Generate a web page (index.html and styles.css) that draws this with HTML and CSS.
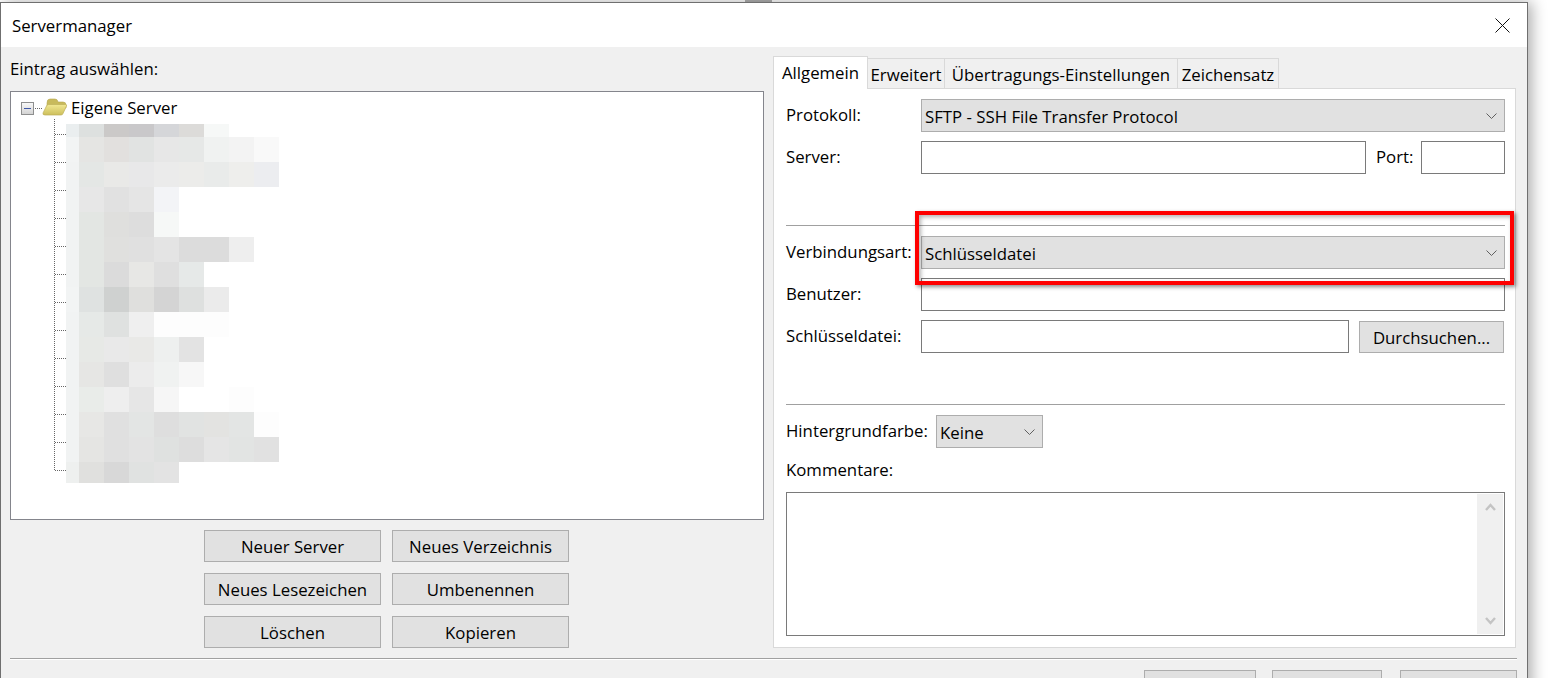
FILE: index.html
```html
<!DOCTYPE html>
<html lang="de">
<head>
<meta charset="utf-8">
<title>Servermanager</title>
<link rel="stylesheet" href="styles.css">
</head>
<body>
<div class="behind"><span class="behind-tab"></span></div>
<div class="window">
  <header class="titlebar">
    <span class="title">Servermanager</span>
    <svg class="close" width="15" height="15" viewBox="0 0 15 15"><path d="M0.5 0.5L14.5 14.5M14.5 0.5L0.5 14.5" stroke="#111" stroke-width="1" fill="none"/></svg>
  </header>
  <main class="main">
    <section class="left">
      <div class="left-label">Eintrag auswählen:</div>
      <div class="tree">
        <div class="tree-root">
          <svg width="46" height="18" viewBox="21 98 46 18">
            <defs>
              <linearGradient id="box" x1="0" y1="0" x2="0" y2="1"><stop offset="0" stop-color="#fafafa"/><stop offset="1" stop-color="#d2d2d2"/></linearGradient>
              <linearGradient id="front" x1="0" y1="0" x2="0" y2="1"><stop offset="0" stop-color="#f1e892"/><stop offset="1" stop-color="#cdbf5c"/></linearGradient>
            </defs>
            <rect x="21.5" y="102.5" width="12" height="12" fill="url(#box)" stroke="#8e8f8f"/>
            <rect x="24" y="108" width="7" height="1" fill="#3f58a8"/>
            <path d="M35 108.5H43" stroke="#666" stroke-dasharray="1 1"/>
            <path d="M47 103q0-4 3-4h5q2.500 0 3 3h5q3 0 3 3v3h-19z" fill="#c8ba5c" stroke="#b8aa52" stroke-width=".6"/>
            <path d="M48.500 104.500h17q1.500 0 1 1.500l-3.500 7.500q-.5 1.500-2 1.500H45q-2.500 0-2-2l3.500-7q.7-1.500 2-1.500z" fill="url(#front)" stroke="#bdb05a" stroke-width=".7"/>
          </svg>
          <span class="tree-name">Eigene Server</span>
        </div>
        <svg class="tree-rows" width="230" height="370" viewBox="54 118 230 370" shape-rendering="crispEdges">
          <g stroke="#666" stroke-dasharray="1 1" fill="none">
            <path d="M54.500 120V471"/>
            <path d="M55 135.500H66M55 163.500H66M55 191.500H66M55 219.500H66M55 247.500H66M55 275.500H66M55 303.500H66M55 331.500H66M55 359.500H66M55 387.500H66M55 415.500H66M55 443.500H66M55 471.500H66"/>
          </g>
          <g>
            <rect x="66" y="125" width="13" height="13" fill="#eaeeef"/><rect x="79" y="125" width="25" height="13" fill="#dde0df"/><rect x="104" y="125" width="25" height="13" fill="#cbc9c8"/><rect x="129" y="125" width="25" height="13" fill="#c9c8ca"/><rect x="154" y="125" width="25" height="13" fill="#d5d6d9"/><rect x="179" y="125" width="25" height="13" fill="#dcdbd9"/><rect x="204" y="125" width="25" height="13" fill="#f6f8f7"/>
            <rect x="66" y="138" width="13" height="25" fill="#f2f4f4"/><rect x="79" y="138" width="25" height="25" fill="#e5e5e3"/><rect x="104" y="138" width="25" height="25" fill="#e2e0de"/><rect x="129" y="138" width="25" height="25" fill="#e1e3e2"/><rect x="154" y="138" width="25" height="25" fill="#e7e7e7"/><rect x="179" y="138" width="25" height="25" fill="#e6e8e7"/><rect x="204" y="138" width="25" height="25" fill="#f0f2f1"/><rect x="229" y="138" width="25" height="25" fill="#f3f3f3"/><rect x="254" y="138" width="25" height="25" fill="#f9f9f9"/>
            <rect x="66" y="163" width="13" height="25" fill="#f1f3f3"/><rect x="79" y="163" width="25" height="25" fill="#e4e7e5"/><rect x="104" y="163" width="25" height="25" fill="#e9e9e7"/><rect x="129" y="163" width="25" height="25" fill="#e8e8e9"/><rect x="154" y="163" width="25" height="25" fill="#ebebeb"/><rect x="179" y="163" width="25" height="25" fill="#ececea"/><rect x="204" y="163" width="25" height="25" fill="#e9ebea"/><rect x="229" y="163" width="25" height="25" fill="#eeeeec"/><rect x="254" y="163" width="25" height="25" fill="#ecedf0"/>
            <rect x="66" y="188" width="13" height="25" fill="#f1f3f3"/><rect x="79" y="188" width="25" height="25" fill="#e7e7e7"/><rect x="104" y="188" width="25" height="25" fill="#e1e1e1"/><rect x="129" y="188" width="25" height="25" fill="#e5e5e5"/><rect x="154" y="188" width="25" height="25" fill="#f3f4f7"/>
            <rect x="66" y="213" width="13" height="25" fill="#f1f3f3"/><rect x="79" y="213" width="25" height="25" fill="#e3e6e3"/><rect x="104" y="213" width="25" height="25" fill="#dfdfdd"/><rect x="129" y="213" width="25" height="25" fill="#dddddd"/><rect x="154" y="213" width="25" height="25" fill="#f6f8f7"/>
            <rect x="66" y="238" width="13" height="25" fill="#f1f3f3"/><rect x="79" y="238" width="25" height="25" fill="#e3e6e3"/><rect x="104" y="238" width="25" height="25" fill="#e0e0de"/><rect x="129" y="238" width="25" height="25" fill="#e0e0e0"/><rect x="154" y="238" width="25" height="25" fill="#e4e4e4"/><rect x="179" y="238" width="25" height="25" fill="#dcdcdc"/><rect x="204" y="238" width="25" height="25" fill="#dcdcdc"/><rect x="229" y="238" width="25" height="25" fill="#eeeeee"/>
            <rect x="66" y="263" width="13" height="25" fill="#f1f3f3"/><rect x="79" y="263" width="25" height="25" fill="#e3e6e3"/><rect x="104" y="263" width="25" height="25" fill="#dbdbdb"/><rect x="129" y="263" width="25" height="25" fill="#e7e7e5"/><rect x="154" y="263" width="25" height="25" fill="#dfdfdf"/><rect x="179" y="263" width="25" height="25" fill="#e6e9e8"/>
            <rect x="66" y="288" width="13" height="25" fill="#f2f4f4"/><rect x="79" y="288" width="25" height="25" fill="#dfe2e1"/><rect x="104" y="288" width="25" height="25" fill="#cfd1d0"/><rect x="129" y="288" width="25" height="25" fill="#dfdfdd"/><rect x="154" y="288" width="25" height="25" fill="#d4d4d4"/><rect x="179" y="288" width="25" height="25" fill="#dee0df"/><rect x="204" y="288" width="25" height="25" fill="#ebebeb"/>
            <rect x="66" y="313" width="13" height="25" fill="#f1f3f3"/><rect x="79" y="313" width="25" height="25" fill="#e6e9e7"/><rect x="104" y="313" width="25" height="25" fill="#dfe1e0"/><rect x="129" y="313" width="25" height="25" fill="#efefef"/><rect x="154" y="313" width="75" height="25" fill="#fdfdfd"/>
            <rect x="66" y="338" width="13" height="25" fill="#f1f3f3"/><rect x="79" y="338" width="25" height="25" fill="#e7e9e6"/><rect x="104" y="338" width="25" height="25" fill="#e9e9e9"/><rect x="129" y="338" width="25" height="25" fill="#e9e9e7"/><rect x="154" y="338" width="25" height="25" fill="#eef0ef"/><rect x="179" y="338" width="25" height="25" fill="#e3e3e3"/>
            <rect x="66" y="363" width="13" height="25" fill="#f1f3f3"/><rect x="79" y="363" width="25" height="25" fill="#e6e6e4"/><rect x="104" y="363" width="25" height="25" fill="#dfdfdf"/><rect x="129" y="363" width="25" height="25" fill="#ececec"/><rect x="154" y="363" width="25" height="25" fill="#f0f2f1"/><rect x="179" y="363" width="25" height="25" fill="#f7f7f7"/>
            <rect x="66" y="388" width="13" height="25" fill="#f1f3f3"/><rect x="79" y="388" width="25" height="25" fill="#e9ece9"/><rect x="104" y="388" width="25" height="25" fill="#eeeeee"/><rect x="129" y="388" width="25" height="25" fill="#e6e6e6"/><rect x="154" y="388" width="25" height="25" fill="#f6f6f6"/><rect x="229" y="388" width="25" height="25" fill="#fdfdfd"/>
            <rect x="66" y="413" width="13" height="25" fill="#f1f3f3"/><rect x="79" y="413" width="25" height="25" fill="#e7e7e5"/><rect x="104" y="413" width="25" height="25" fill="#e0e0e0"/><rect x="129" y="413" width="25" height="25" fill="#e3e5e4"/><rect x="154" y="413" width="25" height="25" fill="#dedede"/><rect x="179" y="413" width="25" height="25" fill="#e1e3e2"/><rect x="204" y="413" width="25" height="25" fill="#e3e3e1"/><rect x="229" y="413" width="25" height="25" fill="#e3e5e4"/><rect x="254" y="413" width="25" height="25" fill="#fdfdfd"/>
            <rect x="66" y="438" width="13" height="25" fill="#f1f3f3"/><rect x="79" y="438" width="25" height="25" fill="#e5e5e3"/><rect x="104" y="438" width="25" height="25" fill="#e0e0e0"/><rect x="129" y="438" width="25" height="25" fill="#e3e3e3"/><rect x="154" y="438" width="25" height="25" fill="#dfe1e0"/><rect x="179" y="438" width="25" height="25" fill="#dddddd"/><rect x="204" y="438" width="25" height="25" fill="#e5e5e5"/><rect x="229" y="438" width="25" height="25" fill="#e2e4e3"/><rect x="254" y="438" width="25" height="25" fill="#e1e1e1"/>
            <rect x="66" y="463" width="13" height="21" fill="#eef0ef"/><rect x="79" y="463" width="25" height="21" fill="#e0e0de"/><rect x="104" y="463" width="25" height="21" fill="#d8d8d8"/><rect x="129" y="463" width="25" height="21" fill="#e0e2e1"/><rect x="154" y="463" width="25" height="21" fill="#e3e3e3"/>
          </g>
        </svg>
      </div>
      <div class="left-buttons">
        <button class="btn">Neuer Server</button>
        <button class="btn">Neues Verzeichnis</button>
        <button class="btn">Neues Lesezeichen</button>
        <button class="btn">Umbenennen</button>
        <button class="btn">Löschen</button>
        <button class="btn">Kopieren</button>
      </div>
    </section>
    <section class="right">
      <nav class="tabs">
        <span class="tab tab-active">Allgemein</span>
        <span class="tab tab-advanced">Erweitert</span>
        <span class="tab tab-transfer">Übertragungs-Einstellungen</span>
        <span class="tab tab-charset">Zeichensatz</span>
      </nav>
      <div class="panel">
        <div class="row">
          <label class="field-label">Protokoll:</label>
          <div class="select grow"><span class="select-text">SFTP - SSH File Transfer Protocol</span><svg class="chev" width="11" height="6" viewBox="0 0 11 6"><path d="M0.500 0.500L5.500 5.500L10.500 0.500" stroke="#606060" fill="none"/></svg></div>
        </div>
        <div class="row row-next">
          <label class="field-label">Server:</label>
          <div class="input grow"></div>
          <label class="port-label">Port:</label>
          <div class="input port-input"></div>
        </div>
        <div class="divider"></div>
        <div class="row">
          <label class="field-label">Verbindungsart:</label>
          <div class="select grow"><span class="select-text">Schlüsseldatei</span><svg class="chev" width="11" height="6" viewBox="0 0 11 6"><path d="M0.500 0.500L5.500 5.500L10.500 0.500" stroke="#606060" fill="none"/></svg></div>
        </div>
        <div class="row row-next">
          <label class="field-label">Benutzer:</label>
          <div class="input grow"></div>
        </div>
        <div class="row row-next">
          <label class="field-label">Schlüsseldatei:</label>
          <div class="input grow"></div>
          <button class="btn btn-browse">Durchsuchen...</button>
        </div>
        <div class="divider"></div>
        <div class="row">
          <label class="field-label field-label-wide">Hintergrundfarbe:</label>
          <div class="select select-color"><span class="select-text">Keine</span><svg class="chev" width="11" height="6" viewBox="0 0 11 6"><path d="M0.500 0.500L5.500 5.500L10.500 0.500" stroke="#606060" fill="none"/></svg></div>
        </div>
        <div class="comment-label">Kommentare:</div>
        <div class="textarea">
          <div class="scrollbar">
            <svg width="11" height="9" viewBox="0 0 11 9"><path d="M1 7L5.500 2L10 7" stroke="#c4c4c4" stroke-width="2.400" fill="none"/></svg>
            <svg width="11" height="9" viewBox="0 0 11 9"><path d="M1 2L5.500 7L10 2" stroke="#c4c4c4" stroke-width="2.400" fill="none"/></svg>
          </div>
        </div>
      </div>
    </section>
  </main>
  <div class="footer-line"></div>
  <footer class="footer">
    <div class="btn footer-btn-a"></div>
    <div class="btn footer-btn-b"></div>
    <div class="btn footer-btn-c"></div>
  </footer>
</div>
<div class="highlight"></div>
</body>
</html>
```
FILE: styles.css
```css
* { box-sizing: border-box; }
html, body { margin: 0; height: 678px; overflow: hidden; background: #fff; }
body {
  position: relative;
  font-family: "Open Sans", "Noto Sans", sans-serif;
  font-size: 16.8px;
  color: #000;
}
.behind { height: 2px; padding-left: 745px; }
.behind-tab { display: block; width: 27px; height: 2px; background: #b0b0b0; }

.window {
  width: 1528px;
  height: 740px;
  background: #f0f0f0;
  border: 1px solid #6f6f6f;
  box-shadow: 4px 0 14px rgba(0, 0, 0, .32);
}
.titlebar {
  height: 44px;
  background: #fff;
  display: flex;
  align-items: center;
  justify-content: space-between;
  padding: 0 17px 0 11px;
}

.main { display: flex; gap: 9px; padding-left: 9px; }
.left { width: 754px; }
.left-label { height: 20px; line-height: 20px; margin: 12px 0 12px; }
.tree {
  height: 429px;
  background: #fff;
  border: 1px solid #84858c;
  overflow: hidden;
}
.tree-root {
  display: flex;
  align-items: center;
  height: 20px;
  margin-top: 5px;
  padding-left: 10px;
}
.tree-name { margin-left: 4px; }
.tree-rows { display: block; margin-left: 43px; }

.left-buttons {
  display: grid;
  grid-template-columns: 177px 177px;
  grid-auto-rows: 32px;
  gap: 11px;
  margin: 10px 0 0 194px;
}
.btn {
  font: inherit;
  color: inherit;
  padding: 0;
  background: #e1e1e1;
  border: 1px solid #adadad;
  border-radius: 0;
}

.right { width: 743px; }
.tabs { display: flex; align-items: flex-end; height: 33px; margin-top: 9px; position: relative; z-index: 1; }
.tab {
  height: 31px;
  line-height: 32px;
  border: 1px solid #d9d9d9;
  border-left: 0;
  border-bottom: 0;
  text-align: center;
  white-space: nowrap;
}
.tab-active {
  width: 95px;
  height: 33px;
  line-height: 32px;
  background: #fff;
  border-left: 1px solid #d9d9d9;
}
.tab-advanced { width: 77px; }
.tab-transfer { width: 233px; }
.tab-charset { width: 101px; }

.panel {
  height: 560px;
  margin-top: -1px;
  padding: 10px 10px 0 12px;
  background: #fff;
  border: 1px solid #d9d9d9;
}
.row { display: flex; align-items: center; height: 33px; }
.row-next { margin-top: 9px; }
.field-label { width: 135px; flex: none; padding-bottom: 2px; }
.field-label-wide { width: 150px; }
.grow { flex: 1; }
.select {
  height: 33px;
  display: flex;
  align-items: center;
  justify-content: space-between;
  padding: 0 7px 0 3px;
  background: #e1e1e1;
  border: 1px solid #adadad;
}
.select-text { padding-top: 2px; }
.select-color { width: 107px; }
.input { height: 33px; background: #fff; border: 1px solid #7a7a7a; }
.port-label { width: 45px; margin-left: 10px; flex: none; padding-bottom: 2px; }
.port-input { width: 84px; flex: none; }
.btn-browse {
  width: 145px;
  height: 32px;
  flex: none;
  margin: 1px 1px 0 10px;
}
.divider {
  height: 1px;
  margin: 51px 0 10px;
  background: #a0a0a0;
}
.comment-label { height: 20px; line-height: 20px; margin: 12px 0 12px; }
.textarea {
  height: 144px;
  background: #fff;
  border: 1px solid #7a7a7a;
  display: flex;
  justify-content: flex-end;
  padding: 1px;
}
.scrollbar {
  width: 26px;
  background: #f0f0f0;
  display: flex;
  flex-direction: column;
  align-items: center;
  justify-content: space-between;
  padding: 9px 0;
}

.footer-line {
  height: 2px;
  margin: 10px 10px 0 9px;
  background: #a0a0a0;
  border-bottom: 1px solid #fff;
}
.footer { display: flex; justify-content: flex-end; height: 32px; margin: 10px 10px 0 0; }
.footer-btn-a { width: 112px; }
.footer-btn-b { width: 110px; margin-left: 16px; }
.footer-btn-c { width: 117px; margin-left: 18px; }

.highlight {
  position: absolute;
  left: 915px;
  top: 211px;
  width: 599px;
  height: 74px;
  border: 4px solid #fe0000;
  box-shadow: 2px 2px 4px rgba(0, 0, 0, .45), inset 2px 2px 4px rgba(0, 0, 0, .3);
}
```
